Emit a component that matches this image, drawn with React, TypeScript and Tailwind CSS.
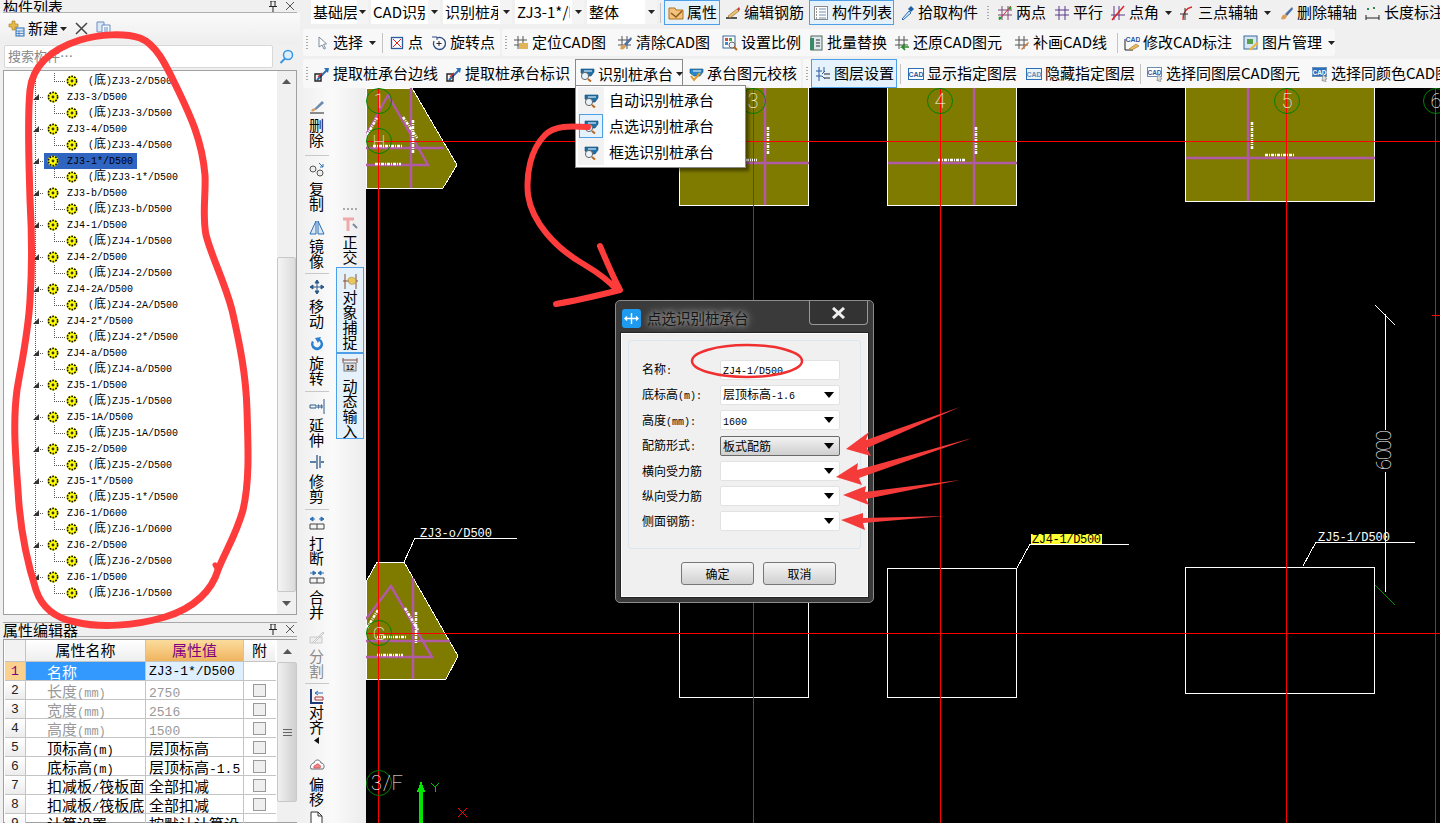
import type { ReactNode } from "react";

const Caret = () => (
  <svg width="7" height="4" viewBox="0 0 7 4" className="shrink-0">
    <path d="M0 0h7L3.5 4z" fill="#222" />
  </svg>
);

const Svg = ({ children }: { children: ReactNode }) => (
  <svg width="16" height="16" viewBox="0 0 16 16" className="shrink-0">
    {children}
  </svg>
);

// ascii runs use a narrower mono face, like the bitmap font in the app
const Mix = ({ text, ascii }: { text: string; ascii: string }) => (
  <>
    {(text.match(/[\x00-\x7f]+|[^\x00-\x7f]+/g) ?? []).map((part, i) =>
      /^[\x00-\x7f]/.test(part) ? (
        <span key={i} className={`font-['Liberation_Mono',monospace] ${ascii}`}>
          {part}
        </span>
      ) : (
        <span key={i}>{part}</span>
      )
    )}
  </>
);

const hash = <path d="M5 1v13M10 1v13M1 5h13M1 10h13" stroke="#555" strokeWidth="1" fill="none" />;
const brush = (
  <>
    <path d="M14 2 7 9l2 2 6-7z" fill="#4a6fa5" />
    <path d="M4 11c2-2 3-2 5 0-1 3-3 4-6 3z" fill="#d9a05b" />
  </>
);
const capMag = (
  <>
    <path d="M2 3h13v3l-3 4H6L2 7z" fill="#1f6fa8" stroke="#0d4a73" strokeWidth=".6" />
    <path d="M5 5h8" stroke="#fff" />
    <circle cx="6" cy="10" r="3.6" fill="#e8f3fb" stroke="#666" />
    <path d="m9 13 3 2.5" stroke="#b5671f" strokeWidth="2" />
  </>
);
const pick = (
  <>
    <path d="M3 14 13 4" stroke="#2a6fb5" strokeWidth="2" />
    <path d="m10 2 5 0-1 5z" fill="#2a6fb5" />
    <path d="M1 8h6v7H1z" fill="none" stroke="#222" strokeWidth="1.4" />
    <path d="M4 11l4-4" stroke="#c33" strokeWidth="1.5" />
  </>
);
const cadBox = (bg: string, fg: string) => (
  <>
    <rect x=".5" y="2.5" width="15" height="11" fill={bg} stroke="#2a6fb5" />
    <text x="8" y="10.5" textAnchor="middle" fontSize="7" fontWeight="700" fill={fg} fontFamily="Liberation Sans, sans-serif">
      CAD
    </text>
  </>
);
const cadCursor = (bg: string, fg: string) => (
  <>
    <rect x=".5" y="1.5" width="14" height="9" fill={bg} stroke="#6a8fb5" />
    <text x="7.5" y="8.5" textAnchor="middle" fontSize="6.5" fontWeight="700" fill={fg} fontFamily="Liberation Sans, sans-serif">
      CAD
    </text>
    <path d="m11 8 4 5-2 .5 1 2.5-1.5.5-1-2.5-1.5 1z" fill="#ddd" stroke="#777" strokeWidth=".6" />
  </>
);

const icons: Record<string, ReactNode> = {
  prop: (
    <>
      <path d="M1 3h6l1 2h7v9H1z" fill="#f4c27a" stroke="#b5701f" />
      <path d="M3 8l5 4 6-6" stroke="#8a5a1f" fill="none" strokeWidth="1.5" />
    </>
  ),
  edit: (
    <>
      <path d="M1 13h11" stroke="#222" strokeWidth="1.5" />
      <path d="m3 11 9-7 2 2-9 7z" fill="#e8c27a" stroke="#a0702a" strokeWidth=".7" />
      <path d="M12 4l2-2 1 2-1 2z" fill="#c33" />
    </>
  ),
  list: (
    <>
      <rect x="1.5" y="1.5" width="13" height="13" fill="#fff" stroke="#8a8a8a" />
      <path d="M6 4h7M6 7h7M6 10h7M6 13h7" stroke="#6c8fb0" />
      <path d="M3 4h1M3 7h1M3 10h1M3 13h1" stroke="#333" />
    </>
  ),
  dropper: (
    <>
      <path d="m3 14 7-8 2 2-8 7z" fill="#cfe6f8" stroke="#2a6fb5" />
      <path d="m9 4 3-3 3 3-3 3z" fill="#1f5fa0" />
    </>
  ),
  two: (
    <>
      <path d="M5 1v14M11 1v14" stroke="#7a4a7a" />
      <path d="M1 5h14M1 10h14" stroke="#7a4a7a" />
      <path d="m2 15 12-14" stroke="#c33" />
      <circle cx="3" cy="13" r="1.5" fill="#2a9a2a" />
      <circle cx="13" cy="3" r="1.5" fill="#2a9a2a" />
    </>
  ),
  par: <path d="M5 1v14M11 1v14M1 5h14M1 10h14" stroke="#5a3a8a" fill="none" />,
  ang: (
    <>
      <path d="M4 1v14M9 1v14M1 10h14" stroke="#5a3a8a" fill="none" />
      <path d="m2 15 12-14" stroke="#d22" strokeWidth="1.5" />
    </>
  ),
  arc: (
    <>
      <path d="M4 15C4 8 7 3 13 2" stroke="#d22" fill="none" strokeWidth="1.3" />
      <path d="M1 9h8M6 3v12" stroke="#333" fill="none" />
    </>
  ),
  brush: brush,
  dim: (
    <>
      <path d="M1 10v5M14 10v5M1 13h13" stroke="#222" />
      <path d="M2 3h2v2H2zM8 2h2v2H8z" fill="#2a8a4a" />
    </>
  ),
  cursor: <path d="m5 2 0 10 3-2 2 4 1.5-.7-2-4 3-.5z" fill="#fff" stroke="#7a8aa0" />,
  point: (
    <>
      <rect x="2.5" y="2.5" width="11" height="11" fill="#fff" stroke="#2a5aa0" strokeWidth="1.3" />
      <path d="m4 4 8 8M12 4l-8 8" stroke="#d22" />
    </>
  ),
  rotate: (
    <>
      <path d="M3 6a6 6 0 1 0 3-3" stroke="#2a4a80" fill="none" strokeWidth="1.3" />
      <path d="M1 2h5v3" stroke="#2a4a80" fill="none" />
      <path d="M8 6v5M5.5 8.5h5" stroke="#222" />
    </>
  ),
  locate: (
    <>
      {hash}
      <rect x="6" y="8" width="9" height="6" fill="#e2b45a" />
    </>
  ),
  clear: (
    <>
      {hash}
      {brush}
    </>
  ),
  scale: (
    <>
      <rect x="1" y="1" width="12" height="12" fill="#fff" stroke="#3a6a9a" />
      <path d="M3 3h3v3H3z" fill="#d44" />
      <path d="M7 3h3v3H7z" fill="#4a4" />
      <path d="M3 7h3v3H3z" fill="#48c" />
      <circle cx="10" cy="10" r="3" fill="#eef" stroke="#666" />
      <path d="m12 12 3 3" stroke="#b5671f" strokeWidth="2" />
    </>
  ),
  batch: (
    <>
      <rect x="3" y="1" width="11" height="14" fill="#dfe8ef" stroke="#4a6a5a" />
      <path d="M2 3h4v12H2z" fill="#3a8a6a" />
      <path d="M8 5h4M8 8h4M8 11h4" stroke="#333" />
    </>
  ),
  restore: (
    <>
      {hash}
      <path d="M15 12H8l3-3M8 12l3 3" stroke="#2a8a2a" strokeWidth="1.7" fill="none" />
    </>
  ),
  redraw: (
    <>
      {hash}
      <path d="m7 14 7-7 1 1-7 7z" fill="#d2783a" />
    </>
  ),
  modify: (
    <>
      <path d="M1 4v11M1 15h8" stroke="#222" />
      <text x="9" y="7" textAnchor="middle" fontSize="7" fontWeight="700" fill="#2a5aa0" fontFamily="Liberation Sans, sans-serif">
        CAD
      </text>
      <path d="m5 14 7-5 3 2-7 4z" fill="#e8b85a" stroke="#a0702a" strokeWidth=".6" />
    </>
  ),
  image: (
    <>
      <rect x="1" y="1" width="13" height="13" fill="#d7e6f5" stroke="#3a6a9a" />
      <path d="M4 4h6v5H4z" fill="#5aa04a" />
      <path d="m6 14 8-7 1.5 1.5-8 7z" fill="#e8b83a" />
    </>
  ),
  pick: pick,
  capMag: capMag,
  capCheck: (
    <>
      <path d="M2 3h13v3l-3 4H6L2 7z" fill="#2a86c8" stroke="#0d4a73" strokeWidth=".6" />
      <path d="M5 5h8" stroke="#fff" />
      <path d="m3 10 3 4 6-7" stroke="#e09a2a" strokeWidth="2" fill="none" />
    </>
  ),
  layers: (
    <>
      <path d="M4 1v14M9 1v5M1 5h6M1 10h6" stroke="#2a5aa0" fill="none" />
      <path d="M9 8h6M9 12h6" stroke="#222" fill="none" />
      <path d="M7 8l3-3M7 10l3 3" stroke="#2a5aa0" />
    </>
  ),
  cadShow: cadBox("#fff", "#2a5aa0"),
  cadHide: cadBox("#eaf2fa", "#6a8ab0"),
  cadSame: cadCursor("#fff", "#2a5aa0"),
  cadColor: cadCursor("#2a6fc0", "#fff"),
};

const Grip = ({ w }: { w: string }) => (
  <div className={`${w} flex h-full shrink-0 flex-col items-center justify-center gap-[2px]`}>
    <i className="h-[1px] w-[2px] bg-[#aaa]" />
    <i className="h-[1px] w-[2px] bg-[#aaa]" />
    <i className="h-[1px] w-[2px] bg-[#aaa]" />
    <i className="h-[1px] w-[2px] bg-[#aaa]" />
    <i className="h-[1px] w-[2px] bg-[#aaa]" />
  </div>
);

const Sep = ({ w }: { w: string }) => (
  <div className={`${w} flex h-full shrink-0 items-center justify-center`}>
    <i className="h-[20px] w-[1px] bg-[#c4c4c4]" />
  </div>
);

function Tool(props: { icon: string; label: string; w: string; on?: boolean; caret?: boolean }) {
  return (
    <div
      className={`${props.w} flex h-full shrink-0 items-center gap-[3px] whitespace-nowrap ${
        props.on ? "border border-[#4d9fe8] bg-[#e5f1fb] pl-[3px]" : "pl-[4px]"
      }`}
    >
      <Svg>{icons[props.icon]}</Svg>
      <span>{props.label}</span>
      {props.caret && (
        <span className="ml-[3px]">
          <Caret />
        </span>
      )}
    </div>
  );
}

function Pick({ text, w, clip, arrow }: { text: string; w: string; clip: string; arrow: string }) {
  return (
    <div className={`${w} flex h-[24px] shrink-0 bg-white`}>
      <div className="min-w-0 flex-1 pl-[2px]">
        <div className={`${clip} overflow-hidden whitespace-nowrap leading-[24px]`}>{text}</div>
      </div>
      <span className={`${arrow} flex items-center justify-center bg-[#f4f4f4]`}>
        <Caret />
      </span>
    </div>
  );
}

const TopToolbars = () => (
  <div className="h-[88px] shrink-0 text-[15px] text-black">
    <div className="flex h-[25px] pl-[11px]">
      <div className="flex gap-[3px]">
        <Pick text="基础层" w="w-[57px]" clip="w-[44px]" arrow="w-[11px]" />
        <Pick text="CAD识别" w="w-[69px]" clip="w-[53px]" arrow="w-[12px]" />
        <Pick text="识别桩承台" w="w-[69px]" clip="w-[53px]" arrow="w-[12px]" />
        <Pick text="ZJ3-1*/D500" w="w-[69px]" clip="w-[53px]" arrow="w-[12px]" />
        <Pick text="整体" w="w-[70px]" clip="w-[54px]" arrow="w-[12px]" />
      </div>
      <Sep w="w-[7px]" />
      <Tool icon="prop" label="属性" w="w-[56px]" on />
      <div className="w-[1px] shrink-0" />
      <Tool icon="edit" label="编辑钢筋" w="w-[88px]" />
      <Tool icon="list" label="构件列表" w="w-[85px]" on />
      <div className="w-[1px] shrink-0" />
      <Tool icon="dropper" label="拾取构件" w="w-[88px]" />
      <Grip w="w-[10px]" />
      <Tool icon="two" label="两点" w="w-[57px]" />
      <Tool icon="par" label="平行" w="w-[56px]" />
      <Tool icon="ang" label="点角" w="w-[69px]" caret />
      <Tool icon="arc" label="三点辅轴" w="w-[99px]" caret />
      <Tool icon="brush" label="删除辅轴" w="w-[87px]" />
      <Tool icon="dim" label="长度标注" w="w-[79px]" />
    </div>
    <div className="mt-[4px] flex h-[27px] pl-[3px]">
      <div className="flex rounded-[3px] bg-[#f8f8f8]">
        <Grip w="w-[7px]" />
        <Tool icon="cursor" label="选择" w="w-[70px]" caret />
        <Sep w="w-[5px]" />
        <Tool icon="point" label="点" w="w-[42px]" />
        <Tool icon="rotate" label="旋转点" w="w-[73px]" />
      </div>
      <div className="ml-[2px] flex rounded-[3px] bg-[#f8f8f8]">
        <Grip w="w-[7px]" />
        <Tool icon="locate" label="定位CAD图" w="w-[104px]" />
        <Tool icon="clear" label="清除CAD图" w="w-[105px]" />
        <Tool icon="scale" label="设置比例" w="w-[86px]" />
        <Tool icon="batch" label="批量替换" w="w-[86px]" />
        <Tool icon="restore" label="还原CAD图元" w="w-[120px]" />
        <Tool icon="redraw" label="补画CAD线" w="w-[105px]" />
        <Sep w="w-[5px]" />
        <Tool icon="modify" label="修改CAD标注" w="w-[119px]" />
        <Tool icon="image" label="图片管理" w="w-[96px]" caret />
      </div>
    </div>
    <div className="mt-[3px] flex h-[29px] pl-[3px]">
      <div className="flex rounded-[3px] bg-[#f8f8f8]">
        <Grip w="w-[7px]" />
        <Tool icon="pick" label="提取桩承台边线" w="w-[132px]" />
        <Tool icon="pick" label="提取桩承台标识" w="w-[133px]" />
        <div className="flex h-full w-[108px] shrink-0 items-center gap-[3px] whitespace-nowrap border border-b-0 border-[#8a8a8a] bg-[#fafafa] pl-[3px]">
          <Svg>{icons.capMag}</Svg>
          <span>识别桩承台</span>
          <Caret />
        </div>
        <div className="w-[1px] shrink-0" />
        <Tool icon="capCheck" label="承台图元校核" w="w-[117px]" />
      </div>
      <div className="ml-[2px] flex flex-1 overflow-hidden rounded-l-[3px] bg-[#f8f8f8]">
        <Grip w="w-[8px]" />
        <Tool icon="layers" label="图层设置" w="w-[86px]" on />
        <Sep w="w-[7px]" />
        <Tool icon="cadShow" label="显示指定图层" w="w-[118px]" />
        <Tool icon="cadHide" label="隐藏指定图层" w="w-[116px]" />
        <Sep w="w-[5px]" />
        <Tool icon="cadSame" label="选择同图层CAD图元" w="w-[165px]" />
        <Tool icon="cadColor" label="选择同颜色CAD图元" w="w-[200px]" />
      </div>
    </div>
  </div>
);

const sideIcons: Record<string, ReactNode> = {
  del: (
    <>
      <path d="M1 15h14" stroke="#222" />
      <path d="m5 11 8-8 2 2-8 7z" fill="#6a8ab0" />
      <path d="M2 13c1-3 3-3 5-2-1 2-3 3-5 2z" fill="#d9a05b" />
    </>
  ),
  copy: (
    <>
      <circle cx="4" cy="7" r="3" fill="#eee" stroke="#555" />
      <circle cx="11" cy="11" r="3" fill="#eee" stroke="#555" />
      <path d="m10 1 4 4M14 2v3h-3" stroke="#2a6fb5" fill="none" />
    </>
  ),
  mirror: <path d="M7 2v13H1zM9 2v13h6z" fill="#dce8f5" stroke="#2a6fb5" />,
  move: <path d="M8 1v14M1 8h14M8 1 6 4h4zM8 15l-2-3h4zM1 8l3-2v4zM15 8l-3-2v4z" fill="#2a5a8a" stroke="#2a5a8a" />,
  spin: <path d="M3 5a6 6 0 1 0 8-2l1-2-6 1 3 5 1-2a3.5 3.5 0 1 1-5 1z" fill="#2a7fd0" />,
  extend: <path d="M1 7h6v3H1zM9 7h1v3H9zM12 7h1v3h-1zM15 1v15" stroke="#2a5a8a" fill="none" />,
  trim: <path d="M8 1v14M11 2v12M1 8h6M12 8h3" stroke="#2a5a8a" strokeWidth="1.3" fill="none" />,
  brk: (
    <>
      <path d="m1 3 3-2v4zM6 3H3M15 3l-3-2v4zM10 3h3" fill="#2a6fb5" stroke="#2a6fb5" />
      <path d="M1 8h14v5H1zM8 8v5" fill="none" stroke="#444" />
    </>
  ),
  merge: (
    <>
      <path d="m7 3-3-2v4zM1 3h4M9 3l3-2v4zM15 3h-4" fill="#2a6fb5" stroke="#2a6fb5" />
      <path d="M1 8h14v5H1zM8 8v5" fill="none" stroke="#444" />
    </>
  ),
  split: <path d="M1 14h12V8H1zM3 14 14 3l1 1L5 14" fill="#eee" stroke="#c8c8c8" />,
  align: (
    <>
      <path d="M2 1v14h12" stroke="#1f3a7a" strokeWidth="2" fill="none" />
      <path d="M6 5h8M9 3 6 5l3 2" stroke="#2a6fb5" fill="none" />
      <path d="M6 9h8v3H6z" fill="none" stroke="#a33" />
    </>
  ),
  offset: (
    <>
      <path d="M2 12c-2-4 2-6 3-6 1-4 6-4 7 0 3 0 4 4 2 6z" fill="#fff" stroke="#667" />
      <path d="M5 11c-1-2 1-3 2-3 1-2 3-1 3 0 2 0 2 2 1 3z" fill="#e88" stroke="#c33" strokeWidth=".6" />
    </>
  ),
  next: <path d="M2 1h7l4 4v11H2zM9 1v4h4" fill="#fff" stroke="#333" />,
  ortho: (
    <>
      <path d="M1 4h11M6 4v12" stroke="#f0a8a8" strokeWidth="3" />
      <path d="m11 9 4 4" stroke="#7a8aa0" strokeWidth="2" />
    </>
  ),
  snap: (
    <>
      <path d="M3 1v15M14 1v15M1 8h16" stroke="#8a4a2a" />
      <path d="M6 6c2-3 8-2 8 2 0 4-6 4-7 2z" fill="#e8c85a" stroke="#a08a3a" strokeWidth=".6" />
    </>
  ),
  input: (
    <>
      <path d="M1 2v5M15 2v5M1 4h14" stroke="#8a4a3a" />
      <rect x="2" y="7" width="12" height="8" fill="#ddd" stroke="#777" />
      <text x="8" y="14" textAnchor="middle" fontSize="7" fontWeight="700" fill="#111" fontFamily="Liberation Sans, sans-serif">
        12
      </text>
    </>
  ),
};

function VItem(props: { icon: string; text: string; cls: string; grey?: boolean; iconCls?: string }) {
  return (
    <div className={`${props.cls} flex flex-col items-center`}>
      <div className={props.iconCls ?? "flex h-[20px] w-full items-start justify-center pt-[1px]"}>
        <Svg>{sideIcons[props.icon]}</Svg>
      </div>
      <div className={`flex flex-col items-center leading-[15px] ${props.grey ? "text-[#8a8a8a]" : "text-black"}`}>
        {props.text.split("").map((c, i) => (
          <span key={i} className="h-[15px]">
            {c}
          </span>
        ))}
      </div>
    </div>
  );
}

const Rule = ({ cls }: { cls: string }) => <div className={`${cls} h-[1px] w-[24px] shrink-0 self-center bg-[#c8c8c8]`} />;

const Grip3 = () => (
  <div className="flex h-[6px] items-end justify-center gap-[2px]">
    <i className="h-[2px] w-[2px] bg-[#aaa]" />
    <i className="h-[2px] w-[2px] bg-[#aaa]" />
    <i className="h-[2px] w-[2px] bg-[#aaa]" />
    <i className="h-[2px] w-[2px] bg-[#aaa]" />
  </div>
);

const SideBar = () => (
  <div className="flex w-[66px] shrink-0 overflow-hidden bg-linear-to-r from-[#f0f0f0] via-[#fafafa] to-[#ececec] pl-[3px] text-[15px]">
    <div className="flex w-[27px] shrink-0 flex-col">
      <VItem icon="del" text="删除" cls="mt-[9px]" />
      <Rule cls="mt-[8px]" />
      <VItem icon="copy" text="复制" cls="mt-[5px]" />
      <VItem icon="mirror" text="镜像" cls="mt-[7px]" />
      <Rule cls="mt-[5px]" />
      <VItem icon="move" text="移动" cls="mt-[4px]" />
      <VItem icon="spin" text="旋转" cls="mt-[7px]" />
      <Rule cls="mt-[6px]" />
      <VItem icon="extend" text="延伸" cls="mt-[5px]" />
      <VItem icon="trim" text="修剪" cls="mt-[6px]" />
      <Rule cls="mt-[6px]" />
      <VItem icon="brk" text="打断" cls="mt-[5px]" />
      <VItem icon="merge" text="合并" cls="mt-[4px]" />
      <VItem icon="split" text="分割" cls="mt-[9px]" grey />
      <Rule cls="mt-[5px]" />
      <VItem icon="align" text="对齐" cls="mt-[4px]" iconCls="flex h-[16px] w-full justify-center" />
      <div className="flex h-[12px] shrink-0 items-center justify-center">
        <svg width="5" height="7" viewBox="0 0 5 7">
          <path d="M5 0v7L0 3.5z" fill="#111" />
        </svg>
      </div>
      <VItem icon="offset" text="偏移" cls="mt-[10px]" />
      <VItem icon="next" text="" cls="mt-[4px]" />
    </div>
    <div className="ml-[6px] mt-[116px] flex w-[28px] shrink-0 flex-col items-stretch self-start">
      <Grip3 />
      <VItem icon="ortho" text="正交" cls="mt-[4px] h-[53px]" />
      <VItem icon="snap" text="对象捕捉" cls="h-[86px] border border-[#4d9fe8] bg-[#e5f1fb] pt-[5px]" iconCls="flex h-[16px] w-full justify-center" />
      <VItem icon="input" text="动态输入" cls="h-[86px] border border-[#4d9fe8] bg-[#e5f1fb] pt-[2px]" iconCls="flex h-[23px] w-full justify-center" />
    </div>
  </div>
);

const PURPLE = "#b15aa5";
const RED = "#ff0000";
const GREEN = "#008000";
const WHITE = "#ffffff";
const OLIVE = "#7f7a00";
const THIN = "Roboto, Liberation Sans, sans-serif";

const Dashes = ({ d }: { d: string }) => (
  <path d={d} stroke={WHITE} strokeWidth="2.5" strokeDasharray="3 1 1 1" fill="none" />
);

const Axis = ({ cx, t }: { cx: number; t: string }) => (
  <>
    <circle cx={cx} cy={101} r={12.5} fill="none" stroke={GREEN} />
    <text x={cx} y={108} textAnchor="middle" fontSize="20" fill={WHITE} fontFamily={THIN} fontWeight="100">
      {t}
    </text>
  </>
);

const CadCanvas = () => (
  <div className="min-w-0 flex-1 bg-black">
    <svg width="1074" height="735" viewBox="366 88 1074 735" className="block" shapeRendering="crispEdges">
      {/* top caps */}
      <path d="M366 88h46l45 77-14 23h-77z" fill={OLIVE} stroke={WHITE} />
      <rect x="679.5" y="85" width="129" height="120" fill={OLIVE} stroke={WHITE} />
      <rect x="887.5" y="85" width="129" height="120" fill={OLIVE} stroke={WHITE} />
      <rect x="1185.5" y="85" width="189" height="116" fill={OLIVE} stroke={WHITE} />
      {/* bottom caps */}
      <path d="M366 582l11-20h27l54 94-12 23h-80z" fill={OLIVE} stroke={WHITE} />
      <rect x="679.5" y="568.5" width="129" height="129" fill="none" stroke={WHITE} />
      <rect x="887.5" y="568.5" width="129" height="129" fill="none" stroke={WHITE} />
      <rect x="1185.5" y="567.5" width="189" height="126" fill="none" stroke={WHITE} />

      <g stroke={PURPLE} strokeWidth="2.5" fill="none" shapeRendering="auto">
        <path d="M366 135 388 95l40 70H366M366 148h78M411 88v100" />
        <path d="M366 619l25-33 41 71H366M366 641h84M413 578v101" />
        <path d="M679 163h130M765 88v117M888 163h129M974 88v117M1186 158h189M1248 88v113" />
      </g>
      <g shapeRendering="auto">
        <Dashes d="M367 135l10-17M403 117l14 21M413 120v33M373 146h30M375 164h26" />
        <Dashes d="M367 628l11-18M405 608l13 22M416 612v31M377 637h30M377 655h26" />
        <Dashes d="M768 127v27M740 160h17M976 127v27M938 160h28M1252 122v28M1265 155h30" />
      </g>
      <path
        d="M366 141.5h1074M366 633.5h1074M378.5 88v735M753.5 88v735M940.5 88v735M1286.5 88v735M1435.5 88v735M1432 315.5h8"
        stroke={RED}
        fill="none"
      />
      <g shapeRendering="auto">
        <Axis cx={379} t="1" />
        <Axis cx={753} t="3" />
        <Axis cx={940} t="4" />
        <Axis cx={1287} t="5" />
        <Axis cx={1436} t="6" />
        <circle cx={379} cy={141} r={12.5} fill="none" stroke={GREEN} />
        <text x={379} y={148} textAnchor="middle" fontSize="19" fill={WHITE} fontFamily={THIN} fontWeight="100">
          H
        </text>
        <circle cx={379} cy={633} r={12.5} fill="none" stroke={GREEN} />
        <text x={379} y={640} textAnchor="middle" fontSize="19" fill={WHITE} fontFamily={THIN} fontWeight="100">
          G
        </text>
        <circle cx={379} cy={783} r={12.5} fill="none" stroke={GREEN} />
        <text x={371} y={790} textLength={32} fontSize="20" fill={WHITE} fontFamily={THIN} fontWeight="100">
          3/F
        </text>
      </g>

      <g fill="none" stroke={WHITE}>
        <path d="M404 562l11-24h102M1017 568l13-24h99M1303 566l13-24h99" />
        <path d="M1385 314v116M1385 472v120M1375 305l20 20" />
      </g>
      <path d="M1375 585l20 20" stroke="#0a8a0a" fill="none" />
      <g fontFamily="Liberation Mono, monospace" fontSize="12" fill={WHITE} shapeRendering="auto">
        <text x="420" y="537" textLength={72}>
          ZJ3-o/D500
        </text>
        <rect x="1031" y="534" width="71" height="10" fill="#ffff33" />
        <text x="1032" y="543" textLength={69} fill="#000">
          ZJ4-1/D500
        </text>
        <text x="1318" y="541" textLength={72}>
          ZJ5-1/D500
        </text>
        <text transform="translate(1391 470) rotate(-90)" fontSize="20" textLength={40} fontFamily={THIN} fontWeight="100">
          6000
        </text>
      </g>

      <path d="M421 780l3 10h1v2h-2v31h-4v-31h-2v-2h1z" fill="#00e600" />
      <path d="M431 783l4 4 4-4M435 787v5" stroke="#00c800" fill="none" />
      <path d="M458 808l9 9M467 808l-9 9" stroke={RED} fill="none" />
    </svg>
  </div>
);

const Dropdown = () => (
  <div className="absolute left-[575px] top-[85px] z-10 w-[171px] border border-[#8a8a8a] bg-white px-[2px] pb-[2px] pt-[1px] text-[15px] shadow-[3px_3px_3px_rgba(0,0,0,0.45)]">
    {["自动识别桩承台", "点选识别桩承台", "框选识别桩承台"].map((t, i) => (
      <div key={t} className="flex h-[26px] items-center">
        <div className="flex h-full w-[26px] items-center justify-center bg-[#f2f2f2]">
          <div className={`flex h-[24px] w-[24px] items-center justify-center ${i === 1 ? "border border-[#4d9fe8] bg-[#e5f1fb]" : ""}`}>
            <Svg>{icons.capMag}</Svg>
          </div>
        </div>
        <span className="ml-[5px] whitespace-nowrap">{t}</span>
      </div>
    ))}
  </div>
);

const Gear = () => (
  <svg width="12" height="12" viewBox="0 0 12 12" className="shrink-0">
    <circle cx="6" cy="6" r="5.5" fill="#ffff00" />
    <circle cx="6" cy="6" r="4.6" fill="none" stroke="#111" strokeWidth="1.6" strokeDasharray="1.8 1.1" />
    <circle cx="6" cy="6" r="1.4" fill="#333" />
  </svg>
);

const Trunk = ({ parent, last }: { parent?: boolean; last?: boolean }) => (
  <svg width="40" height="16" viewBox="0 0 40 16" className="shrink-0" shapeRendering="crispEdges">
    <path d={last ? "M31.5 0v8" : "M31.5 0v16"} stroke="#555" strokeDasharray="1 1" fill="none" />
    {parent && (
      <>
        <path d="M36 8h4" stroke="#555" strokeDasharray="1 1" />
        <path d="M35 5v6h-6z" fill="#333" shapeRendering="auto" />
      </>
    )}
  </svg>
);

const names = [
  "ZJ3-3/D500",
  "ZJ3-4/D500",
  "ZJ3-1*/D500",
  "ZJ3-b/D500",
  "ZJ4-1/D500",
  "ZJ4-2/D500",
  "ZJ4-2A/D500",
  "ZJ4-2*/D500",
  "ZJ4-a/D500",
  "ZJ5-1/D500",
  "ZJ5-1A/D500",
  "ZJ5-2/D500",
  "ZJ5-1*/D500",
  "ZJ6-1/D600",
  "ZJ6-2/D500",
  "ZJ6-1/D500",
];

const ChildRow = ({ name, last }: { name: string; last?: boolean }) => (
  <div className="flex h-[16px] items-center">
    <Trunk last={last} />
    <svg width="22" height="16" viewBox="0 0 22 16" className="shrink-0" shapeRendering="crispEdges">
      <path d="M10.5 0v8.5H22" stroke="#555" strokeDasharray="1 1" fill="none" />
    </svg>
    <Gear />
    <span className="ml-[10px] whitespace-nowrap text-[10px]">
      (<span className="text-[12px]">底</span>){name}
    </span>
  </div>
);

const Tree = () => (
  <div className="mx-[3px] mt-[2px] flex h-[545px] border border-[#a0a0a0] bg-white font-['Liberation_Mono','Noto_Sans_CJK_SC',monospace]">
    <div className="min-w-0 flex-1 pt-[2px] text-black">
      <ChildRow name="ZJ3-2/D500" />
      {names.map((n, i) => (
        <div key={n + i}>
          <div className="flex h-[16px] items-center">
            <Trunk parent last={i === names.length - 1} />
            <div className={`flex h-[16px] items-center whitespace-nowrap pr-[4px] text-[10px] ${n === "ZJ3-1*/D500" ? "bg-[#2f65c0]" : ""}`}>
              <span className="ml-[3px] mr-[8px]">
                <Gear />
              </span>
              {n}
            </div>
          </div>
          <ChildRow name={n} last={i === names.length - 1} />
        </div>
      ))}
    </div>
    <div className="flex w-[19px] shrink-0 flex-col items-center bg-[#f0f0f0]">
      <div className="flex h-[20px] items-center">
        <svg width="9" height="5" viewBox="0 0 9 5">
          <path d="M0 5 4.5 0 9 5z" fill="#555" />
        </svg>
      </div>
      <div className="mt-[166px] h-[335px] w-full rounded-[2px] border border-[#c8c8c8] bg-linear-to-r from-[#f4f4f4] to-[#dcdcdc]" />
      <div className="flex flex-1 items-center">
        <svg width="9" height="5" viewBox="0 0 9 5">
          <path d="M0 0 4.5 5 9 0z" fill="#555" />
        </svg>
      </div>
    </div>
  </div>
);

const rows: { n: string; v: string; grey?: boolean }[] = [
  { n: "长度(mm)", v: "2750", grey: true },
  { n: "宽度(mm)", v: "2516", grey: true },
  { n: "高度(mm)", v: "1500", grey: true },
  { n: "顶标高(m)", v: "层顶标高" },
  { n: "底标高(m)", v: "层顶标高-1.5" },
  { n: "扣减板/筏板面", v: "全部扣减" },
  { n: "扣减板/筏板底", v: "全部扣减" },
  { n: "计算设置", v: "按默认计算设" },
];

const PropTable = () => (
  <div className="mx-[3px] mt-[2px] flex min-h-0 flex-1 border border-[#a0a0a0] bg-white text-[15px]">
    <div className="w-[272px] shrink-0 pl-[1px]">
      <div className="flex h-[22px] border-b border-[#c4c4c4] leading-[19px]">
        <div className="w-[21px] border-r border-[#c4c4c4] bg-[#f2f2f2]" />
        <div className="w-[120px] border-r border-[#c4c4c4] bg-linear-to-b from-white to-[#eeeeee] text-center">属性名称</div>
        <div className="w-[98px] border-r border-[#c4c4c4] bg-linear-to-b from-[#fbdc9c] to-[#efb45e] text-center text-[#800080]">属性值</div>
        <div className="w-[31px] bg-linear-to-b from-white to-[#eeeeee] text-center">附</div>
      </div>
      <div className="flex h-[19px] border-b border-[#c4c4c4] leading-[19px]">
        <div className="w-[21px] border-r border-[#c4c4c4] bg-[#f9d08e] text-center font-['Liberation_Mono',monospace] text-[13px] text-[#800080]">1</div>
        <div className="w-[120px] border-r border-[#c4c4c4] bg-[#3399ff] pl-[21px] text-white">名称</div>
        <div className="w-[98px] border-r border-[#c4c4c4] bg-[#def0ff] pl-[3px] font-['Liberation_Mono',monospace] text-[13px]">ZJ3-1*/D500</div>
        <div className="w-[31px]" />
      </div>
      {rows.map((r, i) => (
        <div key={r.n} className={`flex h-[19px] shrink-0 border-b border-[#c4c4c4] leading-[19px] ${r.grey ? "text-[#999999]" : "text-black"}`}>
          <div className="w-[21px] border-r border-[#c4c4c4] bg-linear-to-b from-white to-[#ececec] text-center font-['Liberation_Mono',monospace] text-[13px] text-[#222]">
            {i + 2}
          </div>
          <div className="w-[120px] whitespace-nowrap border-r border-[#c4c4c4] pl-[21px]">
            <Mix text={r.n} ascii="text-[12px]" />
          </div>
          <div className="w-[98px] overflow-hidden whitespace-nowrap border-r border-[#c4c4c4] pl-[3px]">
            <Mix text={r.v} ascii="text-[13px]" />
          </div>
          <div className="flex w-[31px] items-center justify-center">
            {i < 7 && <i className="h-[13px] w-[13px] border border-[#999] bg-[#efefef]" />}
          </div>
        </div>
      ))}
    </div>
    <div className="ml-[1px] flex w-[20px] shrink-0 flex-col items-center bg-[#f0f0f0]">
      <div className="flex h-[22px] items-center">
        <svg width="9" height="5" viewBox="0 0 9 5">
          <path d="M0 5 4.5 0 9 5z" fill="#555" />
        </svg>
      </div>
      <div className="flex h-[140px] w-full flex-col items-center justify-center gap-[2px] rounded-[2px] border border-[#c8c8c8] bg-linear-to-r from-[#f0f0f0] to-[#d0d0d0]">
        <i className="h-[1px] w-[9px] bg-[#666]" />
        <i className="h-[1px] w-[9px] bg-[#666]" />
        <i className="h-[1px] w-[9px] bg-[#666]" />
      </div>
    </div>
  </div>
);

const PanelIcons = () => (
  <svg width="26" height="11" viewBox="0 0 26 11" className="shrink-0">
    <path d="M1 0h6M2 0v5M6 0v5M0 5.5h8M4 6v5" stroke="#222" fill="none" />
    <path d="m17 1 8 8M25 1l-8 8" stroke="#555" fill="none" />
  </svg>
);

const LeftPanel = () => (
  <div className="flex w-[300px] shrink-0 flex-col bg-[#f0f0f0] text-[15px] text-black">
    <div className="mx-[3px] flex h-[13px] items-center justify-between overflow-hidden border-b border-[#b0b0b0] pr-[2px] leading-[11px]">
      <span>构件列表</span>
      <PanelIcons />
    </div>
    <div className="flex h-[31px] items-center bg-linear-to-b from-[#fafafa] to-[#eeeeee] pl-[8px]">
      <svg width="17" height="17" viewBox="0 0 17 17" className="shrink-0">
        <path d="M4 1h3v3h3v3H7v3H4V7H1V4h3z" fill="#e8b84a" stroke="#a07a20" strokeWidth=".6" />
        <rect x="8" y="8" width="8" height="8" fill="#dce8f5" stroke="#2a6fb5" />
        <path d="M8 11h8M8 13.5h8M11 11v5" stroke="#2a6fb5" strokeWidth=".7" />
      </svg>
      <span className="ml-[3px]">新建</span>
      <span className="ml-[2px]">
        <Caret />
      </span>
      <svg width="13" height="13" viewBox="0 0 13 13" className="ml-[8px] shrink-0">
        <path d="m1 1 11 11M12 1 1 12" stroke="#444" strokeWidth="1.5" />
      </svg>
      <svg width="16" height="15" viewBox="0 0 16 15" className="ml-[8px] shrink-0">
        <path d="M1 1h7v10H1z" fill="#dce8f5" stroke="#6a8fc0" />
        <path d="M6 4h8v10H6z" fill="#f4f8fd" stroke="#6a8fc0" />
        <path d="M8 7h4M8 9h4M8 11h4" stroke="#6a8fc0" />
      </svg>
    </div>
    <div className="ml-[4px] flex h-[24px] items-center">
      <div className="flex h-[23px] w-[269px] items-center rounded-[2px] border border-[#d8d8d8] bg-white pl-[3px] text-[13px] text-[#888]">搜索构件…</div>
      <svg width="15" height="15" viewBox="0 0 15 15" className="ml-[6px] shrink-0">
        <circle cx="9" cy="6" r="4.5" fill="#dcefff" stroke="#3a96e0" strokeWidth="1.5" />
        <path d="M6 9.5 1.5 14" stroke="#3a96e0" strokeWidth="2" />
      </svg>
    </div>
    <Tree />
    <div className="mx-[3px] mt-[7px] flex h-[15px] items-center justify-between border-y border-[#a8a8a8] pr-[2px] leading-[13px]">
      <span>属性编辑器</span>
      <PanelIcons />
    </div>
    <PropTable />
  </div>
);

const Field = ({ label, value, kind }: { label: string; value?: string; kind?: "text" | "on" }) => (
  <div className="flex h-[25.3px] items-center">
    <span className="w-[78px] shrink-0 whitespace-nowrap">
      <Mix text={label} ascii="text-[10px]" />
    </span>
    <div
      className={`flex h-[20px] w-[120px] items-center justify-between rounded-[2px] pl-[2px] pr-[5px] ${
        kind === "on" ? "border border-[#6a6a6a] bg-linear-to-b from-[#f2f2f2] to-[#cfcfcf]" : "border border-[#e2e2e2] bg-white"
      }`}
    >
      <span>{value && <Mix text={value} ascii="text-[10px]" />}</span>
      {kind !== "text" && (
        <svg width="10" height="6" viewBox="0 0 10 6" className="shrink-0">
          <path d="M0 0h10L5 6z" fill="#000" />
        </svg>
      )}
    </div>
  </div>
);

const Dialog = () => (
  <div className="absolute left-[615px] top-[300px] z-10 h-[303px] w-[259px] rounded-[5px] border border-[#8c8c8c] bg-[#3a3a3a] text-[12px] text-black">
    <div className="flex h-[32px] items-start justify-between">
      <div className="ml-[6px] mt-[7px] flex items-center gap-[6px]">
        <div className="flex h-[19px] w-[19px] items-center justify-center rounded-[3px] bg-[#1d9bf0]">
          <svg width="15" height="13" viewBox="0 0 15 13">
            <path d="M1 6.5h13M7.5 1v11M3 4.5 1 6.5l2 2M12 4.5l2 2-2 2" stroke="#fff" strokeWidth="1.4" fill="none" />
          </svg>
        </div>
        <span className="text-[14.5px] leading-[20px] text-[#151515] [text-shadow:0_0_5px_#999,0_0_9px_#999,0_0_12px_#888]">点选识别桩承台</span>
      </div>
      <div className="mr-[5px] flex h-[24px] w-[59px] items-center justify-center rounded-b-[4px] border border-t-0 border-[#999] bg-[#333]">
        <svg width="15" height="12" viewBox="0 0 15 12">
          <path d="m2 1 11 10M13 1 2 11" stroke="#eee" strokeWidth="3" />
        </svg>
      </div>
    </div>
    <div className="mx-[5px] h-[264px] border border-white bg-[#f0f0f0] p-[6px] outline outline-1 outline-[#222]">
      <div className="h-[209px] rounded-[3px] border border-[#dce6ee] pl-[13px] pt-[16px]">
        <Field label="名称:" value="ZJ4-1/D500" kind="text" />
        <Field label="底标高(m):" value="层顶标高-1.6" />
        <Field label="高度(mm):" value="1600" />
        <Field label="配筋形式:" value="板式配筋" kind="on" />
        <Field label="横向受力筋" />
        <Field label="纵向受力筋" />
        <Field label="侧面钢筋:" />
      </div>
      <div className="ml-[53px] mt-[13px] flex gap-[9px]">
        <div className="flex h-[23px] w-[73px] items-center justify-center rounded-[3px] border border-[#777] bg-linear-to-b from-[#f6f6f6] to-[#d0d0d0]">确定</div>
        <div className="flex h-[23px] w-[73px] items-center justify-center rounded-[3px] border border-[#777] bg-linear-to-b from-[#f6f6f6] to-[#d0d0d0]">取消</div>
      </div>
    </div>
  </div>
);

// hand drawn marks on top of the screenshot
const Scribbles = () => (
  <svg width="1440" height="823" viewBox="0 0 1440 823" className="pointer-events-none absolute left-0 top-0 z-20" fill="none" strokeLinejoin="round" strokeLinecap="round">
    <path
      d="M30 200C29 160 27 120 30 90C33 62 55 48 80 40C100 34 125 33 140 38C158 45 168 70 178 90C190 115 202 140 205 175C206 195 202 215 206 235C212 258 224 280 232 310C240 345 246 375 247 410C248 445 250 480 243 510C236 535 226 550 218 570C212 590 195 608 165 617C135 626 100 628 75 622C55 618 42 608 36 590C28 565 20 530 18 490C15 450 13 420 17 390C22 360 28 335 30 300C32 270 32 235 30 200Z"
      stroke="#ff3c3c"
      strokeWidth="7"
    />
    <path d="M218 570l-3 -5" stroke="#ff3c3c" strokeWidth="5" />
    <path
      d="M588 127C570 126 555 125 545 135C530 150 526 175 528 195C532 222 555 248 585 265C600 274 610 282 617 290M556 304C580 300 600 295 620 290C612 275 606 260 600 246"
      stroke="#ff3c3c"
      strokeWidth="6"
    />
    <ellipse cx="747" cy="361" rx="55" ry="16" stroke="#f03030" strokeWidth="2.5" />
    <g fill="#f53a3a">
      <path d="M846 449 869 432 866 440 960 407 867 448 871 456z" />
      <path d="M836 477 858 463 857 470 972 438 859 478 862 485z" />
      <path d="M843 495 866 486 865 492 960 480 866 499 869 505z" />
      <path d="M841 520 863 513 863 518 945 516 863 523 865 530z" />
    </g>
  </svg>
);

export default function App() {
  return (
    <div className="relative flex h-[823px] w-[1440px] overflow-hidden bg-[#f0f0f0] font-['Noto_Sans_CJK_SC',sans-serif]">
      <LeftPanel />
      <div className="flex min-w-0 flex-1 flex-col">
        <TopToolbars />
        <div className="flex min-h-0 flex-1">
          <SideBar />
          <CadCanvas />
        </div>
      </div>
      <Dropdown />
      <Dialog />
      <Scribbles />
    </div>
  );
}
